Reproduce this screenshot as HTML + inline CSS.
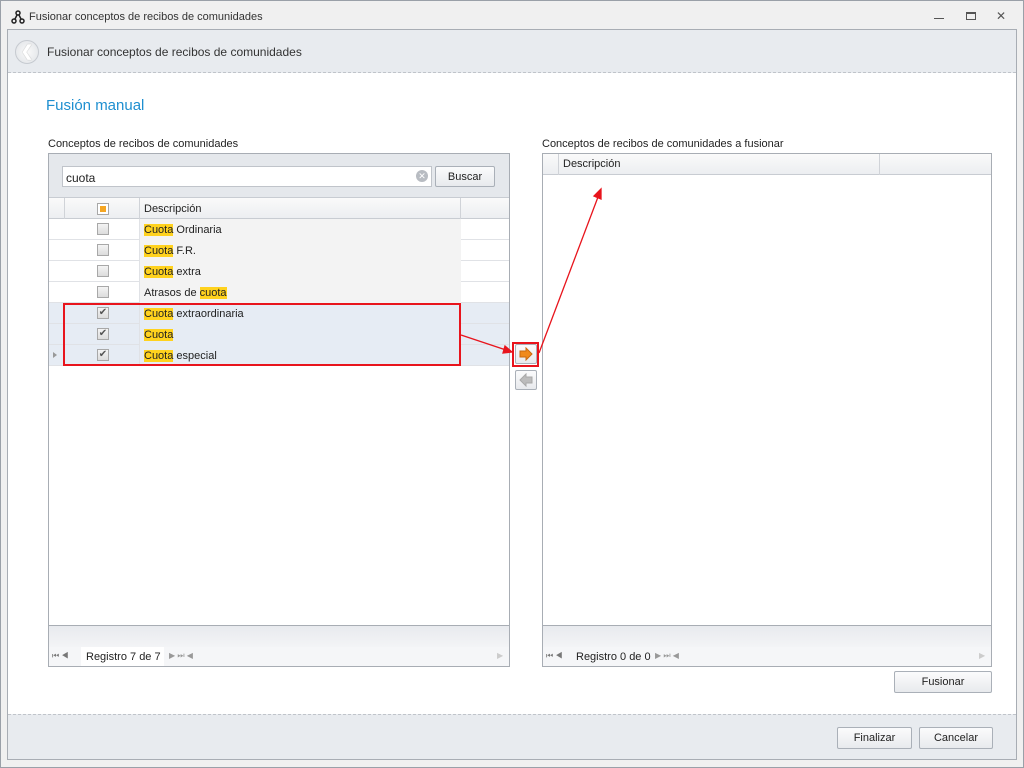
<!DOCTYPE html>
<html><head><meta charset="utf-8"><style>
*{box-sizing:border-box;margin:0;padding:0}
body{width:1024px;height:768px;position:relative;overflow:hidden;font-family:"Liberation Sans",sans-serif;font-size:11px;color:#222;background:#f0f0f0;white-space:nowrap}
.a{position:absolute}
.btn{position:absolute;border:1px solid #aab0b8;border-radius:2px;background:linear-gradient(#fbfbfc,#e8eaed);text-align:center;line-height:21px;font-size:11px}
.hl{background:#ffd21e}
.row{position:absolute;left:0;width:460px;height:21px;border-bottom:1px solid #e0e2e6}
.row .c{position:absolute;left:48px;top:4px;width:12px;height:12px;border:1px solid #a8a8a8;background:linear-gradient(#f4f4f4,#dcdcdc)}
.row .t{position:absolute;left:95px;top:5px}
.row .d{position:absolute;left:90px;top:0;width:322px;height:21px;background:#f3f3f3;border-left:1px solid #e0e2e6}
.sel .d{background:#e6ecf4}.sel{background:#e6ecf4}
</style></head><body>
<div class="a" style="left:0;top:0;width:1024px;height:768px;border:1px solid #9aa0a8;background:#f0f0f0"></div>
<svg class="a" style="left:11px;top:10px" width="14" height="14" viewBox="0 0 14 14"><circle cx="7" cy="3" r="2" fill="none" stroke="#222" stroke-width="1.5"/><circle cx="3" cy="11" r="2" fill="none" stroke="#222" stroke-width="1.5"/><circle cx="11" cy="11" r="2" fill="none" stroke="#222" stroke-width="1.5"/><path d="M6 5L4 9M8 5L10 9" stroke="#222" stroke-width="1.5"/></svg>
<div class="a" style="left:29px;top:11px;color:#333">Fusionar conceptos de recibos de comunidades</div>
<div class="a" style="left:934px;width:10px;height:1px;background:#555;top:18px"></div>
<div class="a" style="left:966px;top:12px;width:10px;height:8px;border:1px solid #555;border-top-width:2px"></div>
<div class="a" style="left:996px;top:9px;font-size:12px;color:#555">✕</div>
<div class="a" style="left:7px;top:29px;width:1010px;height:731px;border:1px solid #a8adb4;background:#fff"></div>
<div class="a" style="left:8px;top:30px;width:1008px;height:43px;background:#e8ebef;border-bottom:1px dashed #c0c4ca"></div>
<div class="a" style="left:15px;top:40px;width:24px;height:24px;border-radius:50%;border:1px solid #c6cad0;background:radial-gradient(#fafafa,#dfe2e6);color:#fff;text-align:center;line-height:22px;font-size:15px;font-weight:bold;text-shadow:0 0 1px #999">&#10094;</div>
<div class="a" style="left:47px;top:45px;font-size:12px;color:#333">Fusionar conceptos de recibos de comunidades</div>
<div class="a" style="left:46px;top:97px;font-size:15px;color:#1e8fd0">Fusión manual</div>
<div class="a" style="left:48px;top:138px">Conceptos de recibos de comunidades</div>
<div class="a" style="left:542px;top:138px">Conceptos de recibos de comunidades a fusionar</div>

<div class="a" style="left:48px;top:153px;width:462px;height:514px;border:1px solid #a8adb4;background:#fff">
 <div class="a" style="left:0;top:0;width:460px;height:44px;background:#e5e8ec;border-bottom:1px solid #c8ccd2"></div>
 <div class="a" style="left:13px;top:12px;width:370px;height:21px;border:1px solid #c0c4ca;background:#fff;padding:4px 3px;font-size:12px">cuota</div>
 <div class="a" style="left:367px;top:16px;width:12px;height:12px;border-radius:50%;background:#b8bcc2;color:#fff;font-size:9px;line-height:12px;text-align:center">✕</div>
 <div class="btn" style="left:386px;top:12px;width:60px;height:21px">Buscar</div>
 <div class="a" style="left:0;top:44px;width:460px;height:21px;background:linear-gradient(#fafafa,#eceef1);border-bottom:1px solid #c8ccd2"></div>
 <div class="a" style="left:15px;top:44px;width:1px;height:21px;background:#d0d3d8"></div>
 <div class="a" style="left:90px;top:44px;width:1px;height:21px;background:#d0d3d8"></div>
 <div class="a" style="left:411px;top:44px;width:1px;height:21px;background:#d0d3d8"></div>
 <div class="a" style="left:48px;top:49px;width:12px;height:12px;border:1px solid #a8a8a8;background:#fff"><div style="margin:2px;width:6px;height:6px;background:#f5a623"></div></div>
 <div class="a" style="left:95px;top:49px">Descripción</div>
 <div class="row" style="top:65px"><div class="d"></div><div class="c"></div><div class="t"><span class="hl">Cuota</span> Ordinaria</div></div>
 <div class="row" style="top:86px"><div class="d"></div><div class="c"></div><div class="t"><span class="hl">Cuota</span> F.R.</div></div>
 <div class="row" style="top:107px"><div class="d"></div><div class="c"></div><div class="t"><span class="hl">Cuota</span> extra</div></div>
 <div class="row" style="top:128px"><div class="d"></div><div class="c"></div><div class="t">Atrasos de <span class="hl">cuota</span></div></div>
 <div class="row sel" style="top:149px"><div class="d"></div><div class="c" style="font-size:10px;line-height:10px;text-align:center;color:#555">✔</div><div class="t"><span class="hl">Cuota</span> extraordinaria</div></div>
 <div class="row sel" style="top:170px"><div class="d"></div><div class="c" style="font-size:10px;line-height:10px;text-align:center;color:#555">✔</div><div class="t"><span class="hl">Cuota</span></div></div>
 <div class="row sel" style="top:191px"><div class="d"></div><div class="c" style="font-size:10px;line-height:10px;text-align:center;color:#555">✔</div><div class="t"><span class="hl">Cuota</span> especial</div><div class="a" style="left:4px;top:7px;border-left:4px solid #999;border-top:3px solid transparent;border-bottom:3px solid transparent"></div></div>
 <div class="a" style="left:15px;top:149px;width:1px;height:63px;background:#d0d3d8"></div>
 <div class="a" style="left:14px;top:149px;width:398px;height:63px;border:2px solid #e8141c"></div>
 <div class="a" style="left:0;top:471px;width:460px;height:22px;background:linear-gradient(#e8eaee,#f3f4f6);border-top:1px solid #a8adb4"></div>
 <div class="a" style="left:0;top:493px;width:460px;height:19px;background:#f5f6f8"></div>
 <div class="a" style="left:3px;top:497px;font-size:8px;color:#777">⏮ ◀</div>
 <div class="a" style="left:32px;top:493px;width:83px;height:19px;background:#fff;padding:4px 5px">Registro 7 de 7</div>
 <div class="a" style="left:120px;top:497px;font-size:8px;color:#999">▶ ⏭ &#9664;</div>
 <div class="a" style="left:448px;top:497px;font-size:8px;color:#ccc">▶</div>
</div>

<div class="a" style="left:542px;top:153px;width:450px;height:514px;border:1px solid #a8adb4;background:#fff">
 <div class="a" style="left:0;top:0;width:448px;height:21px;background:linear-gradient(#fafafa,#eceef1);border-bottom:1px solid #c8ccd2"></div>
 <div class="a" style="left:15px;top:0;width:1px;height:21px;background:#d0d3d8"></div>
 <div class="a" style="left:336px;top:0;width:1px;height:21px;background:#d0d3d8"></div>
 <div class="a" style="left:20px;top:4px">Descripción</div>
 <div class="a" style="left:0;top:471px;width:448px;height:22px;background:linear-gradient(#e8eaee,#f3f4f6);border-top:1px solid #a8adb4"></div>
 <div class="a" style="left:0;top:493px;width:448px;height:19px;background:#f5f6f8"></div>
 <div class="a" style="left:3px;top:497px;font-size:8px;color:#777">⏮ ◀</div>
 <div class="a" style="left:28px;top:493px;width:83px;height:19px;padding:4px 5px">Registro 0 de 0</div>
 <div class="a" style="left:112px;top:497px;font-size:8px;color:#999">▶ ⏭ &#9664;</div>
 <div class="a" style="left:436px;top:497px;font-size:8px;color:#ccc">▶</div>
</div>

<div class="btn" style="left:515px;top:344px;width:22px;height:20px"></div>
<svg class="a" style="left:518px;top:347px" width="16" height="14"><path d="M2 4H8V1L14 7L8 13V10H2Z" fill="#f08a1c" stroke="#c86a10"/></svg>
<div class="a" style="left:512px;top:342px;width:27px;height:25px;border:2px solid #e8141c"></div>
<div class="btn" style="left:515px;top:370px;width:22px;height:20px"></div>
<svg class="a" style="left:518px;top:373px" width="16" height="14"><path d="M14 4H8V1L2 7L8 13V10H14Z" fill="#bcbcbc" stroke="#a8a8a8"/></svg>

<svg class="a" style="left:0;top:0" width="1024" height="768"><g stroke="#e8141c" stroke-width="1.3" fill="#e8141c"><line x1="461" y1="335" x2="506" y2="350"/><path d="M512 352L503 353L505 346Z"/><line x1="539" y1="353" x2="598" y2="197"/><path d="M601 189L601 199L594 196Z"/></g></svg>

<div class="btn" style="left:894px;top:671px;width:98px;height:22px">Fusionar</div>
<div class="a" style="left:8px;top:714px;width:1008px;height:45px;background:#e8ebef;border-top:1px dashed #c0c4ca"></div>
<div class="btn" style="left:837px;top:727px;width:75px;height:22px">Finalizar</div>
<div class="btn" style="left:919px;top:727px;width:74px;height:22px">Cancelar</div>
</body></html>
